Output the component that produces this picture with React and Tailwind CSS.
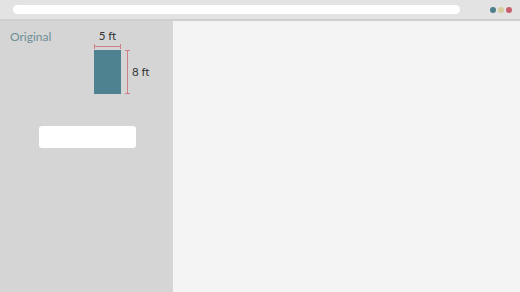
export default function App() {
  return (
    <div className="flex h-[292px] w-[520px] flex-col overflow-hidden bg-[#f4f4f4] font-['Lato',sans-serif]">
      {/* browser chrome */}
      <div className="flex h-[21px] shrink-0 items-center border-b-2 border-[#cfcfcf] bg-[#e3e3e3] pl-[13px] pr-[8px]">
        <div className="h-[9px] w-[447px] rounded-full bg-white" />
        <div className="ml-auto flex gap-[2px]">
          <span className="h-[6px] w-[6px] rounded-full bg-[#4e7f8c]" />
          <span className="h-[6px] w-[6px] rounded-full bg-[#d6cc9e]" />
          <span className="h-[6px] w-[6px] rounded-full bg-[#c95f6d]" />
        </div>
      </div>

      <div className="flex flex-1">
        {/* sidebar */}
        <div className="flex w-[173px] shrink-0 flex-col bg-[#d5d5d5]">
          <div className="flex pt-[8px]">
            <span className="w-[94px] shrink-0 pl-[10px] pt-[1px] text-[12px] leading-[14px] text-[#6e8f98]">Original</span>
            <div className="flex flex-col">
              <span className="w-[27px] text-center text-[11.5px] leading-[14px] text-[#333]">5 ft</span>
              <div className="mt-[1px] flex h-[5px] w-[27px] items-center justify-between">
                <span className="h-[5px] w-px bg-[#cf7f88]" />
                <span className="h-px flex-1 bg-[#cf7f88]" />
                <span className="h-[5px] w-px bg-[#cf7f88]" />
              </div>
              <div className="mt-[1px] flex items-center">
                <div className="h-[44px] w-[27px] bg-[#4e8290]" />
                <div className="ml-[4px] flex h-[44px] w-[5px] flex-col items-center">
                  <span className="h-px w-[5px] bg-[#cf7f88]" />
                  <span className="w-px flex-1 bg-[#cf7f88]" />
                  <span className="h-px w-[5px] bg-[#cf7f88]" />
                </div>
                <span className="ml-[2px] text-[11.5px] leading-[14px] text-[#333]">8 ft</span>
              </div>
            </div>
          </div>
          <div className="ml-[39px] mt-[32px] h-[22px] w-[97px] rounded-[3px] bg-white" />
        </div>
        {/* main */}
        <div className="flex-1 bg-[#f4f4f4]" />
      </div>
    </div>
  );
}
